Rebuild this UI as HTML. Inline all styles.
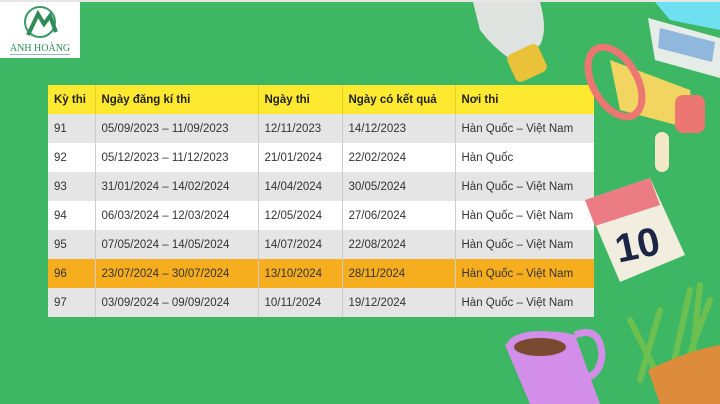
<!DOCTYPE html>
<html><head><meta charset="utf-8"><style>
*{margin:0;padding:0;box-sizing:border-box}
body{width:720px;height:404px;overflow:hidden;background:#3eb764;position:relative;font-family:"Liberation Sans",sans-serif}
.top{position:absolute;left:0;top:0;width:720px;height:2px;background:#e6e6e6}
.logo{position:absolute;left:0;top:2px;width:80px;height:56px;background:#fff}
table{position:absolute;left:48px;top:85px;border-collapse:collapse;font-size:11.5px;color:#333}
td,th{height:29px;padding:0 6px;text-align:left;border-left:1px solid #ccc;white-space:nowrap}
th{background:#fde930;color:#222;font-weight:bold;border-left:1px solid #e5d020}
tr:nth-child(even) td{background:#e5e5e5}
tr:nth-child(odd) td{background:#fff}
tr.hl td{background:#f6ae1e!important}
td:first-child,th:first-child{border-left:none}
</style></head><body>
<div class="top"></div>
<div class="logo">
<svg width="80" height="56" viewBox="0 0 80 56">
<circle cx="40" cy="20" r="15" fill="none" stroke="#3a9a6a" stroke-width="2"/>
<path d="M28 33 L38 12 L44 22 L50 14 L56 30" fill="none" stroke="#2e8b57" stroke-width="4"/>
<text x="40" y="49" text-anchor="middle" font-family="Liberation Serif" font-size="10" fill="#2e8b57">ANH HOÀNG</text>
<rect x="10" y="52" width="60" height="1" fill="#8bc"/>
</svg></div>
<table>
<tr><th style="width:47px">Kỳ thi</th><th style="width:163px">Ngày đăng kí thi</th><th style="width:84px">Ngày thi</th><th style="width:113px">Ngày có kết quả</th><th style="width:139px">Nơi thi</th></tr>
<tr><td>91</td><td>05/09/2023 – 11/09/2023</td><td>12/11/2023</td><td>14/12/2023</td><td>Hàn Quốc – Việt Nam</td></tr>
<tr><td>92</td><td>05/12/2023 – 11/12/2023</td><td>21/01/2024</td><td>22/02/2024</td><td>Hàn Quốc</td></tr>
<tr><td>93</td><td>31/01/2024 – 14/02/2024</td><td>14/04/2024</td><td>30/05/2024</td><td>Hàn Quốc – Việt Nam</td></tr>
<tr><td>94</td><td>06/03/2024 – 12/03/2024</td><td>12/05/2024</td><td>27/06/2024</td><td>Hàn Quốc – Việt Nam</td></tr>
<tr><td>95</td><td>07/05/2024 – 14/05/2024</td><td>14/07/2024</td><td>22/08/2024</td><td>Hàn Quốc – Việt Nam</td></tr>
<tr class="hl"><td>96</td><td>23/07/2024 – 30/07/2024</td><td>13/10/2024</td><td>28/11/2024</td><td>Hàn Quốc – Việt Nam</td></tr>
<tr><td>97</td><td>03/09/2024 – 09/09/2024</td><td>10/11/2024</td><td>19/12/2024</td><td>Hàn Quốc – Việt Nam</td></tr>
</table>
<svg style="position:absolute;left:0;top:0" width="720" height="404">
<!-- bulb -->
<path d="M473 2 L540 2 Q548 30 540 45 L515 62 Q495 50 480 30 Z" fill="#dfe3e0"/>
<rect x="510" y="48" width="34" height="30" rx="6" transform="rotate(-25 527 63)" fill="#e9c23a"/>
<!-- laptop -->
<path d="M655 2 L720 2 L720 30 L670 20 Z" fill="#6ee0f0"/>
<path d="M648 18 L720 38 L720 78 L655 60 Z" fill="#e6ece8"/>
<path d="M660 28 L715 42 L712 62 L658 48 Z" fill="#8fb8dc"/>
<!-- megaphone -->
<path d="M610 60 L690 90 L695 130 L620 110 Z" fill="#f1d560"/>
<ellipse cx="615" cy="82" rx="22" ry="38" transform="rotate(-30 615 82)" fill="none" stroke="#ec7672" stroke-width="7"/>
<rect x="655" y="132" width="14" height="40" rx="7" fill="#f3e7c8"/>
<rect x="675" y="95" width="30" height="38" rx="8" fill="#ec7672"/>
<!-- calendar -->
<path d="M585 200 L650 178 L685 255 L620 282 Z" fill="#f1eedf"/>
<path d="M585 200 L650 178 L660 205 L595 226 Z" fill="#ec7c83"/>
<text x="615" y="260" font-size="40" font-weight="bold" fill="#1d2546" transform="rotate(-12 630 245)">10</text>
<!-- mug -->
<path d="M505 345 Q540 325 575 335 L600 404 L530 404 Z" fill="#d28ee8"/>
<ellipse cx="540" cy="345" rx="33" ry="14" fill="#d28ee8"/>
<ellipse cx="540" cy="347" rx="26" ry="9" fill="#7a4a30"/>
<path d="M575 335 Q600 325 602 355 Q600 375 585 378" fill="none" stroke="#d28ee8" stroke-width="7"/>
<!-- plant -->
<path d="M640 380 L660 310 M670 380 L690 290 M680 380 L710 300 M660 380 L630 320 M690 380 L700 285" stroke="#6bc050" stroke-width="6" stroke-linecap="round"/>
<path d="M648 370 Q690 350 720 345 L720 404 L660 404 Z" fill="#dd8c3c"/>
</svg>
</body></html>
